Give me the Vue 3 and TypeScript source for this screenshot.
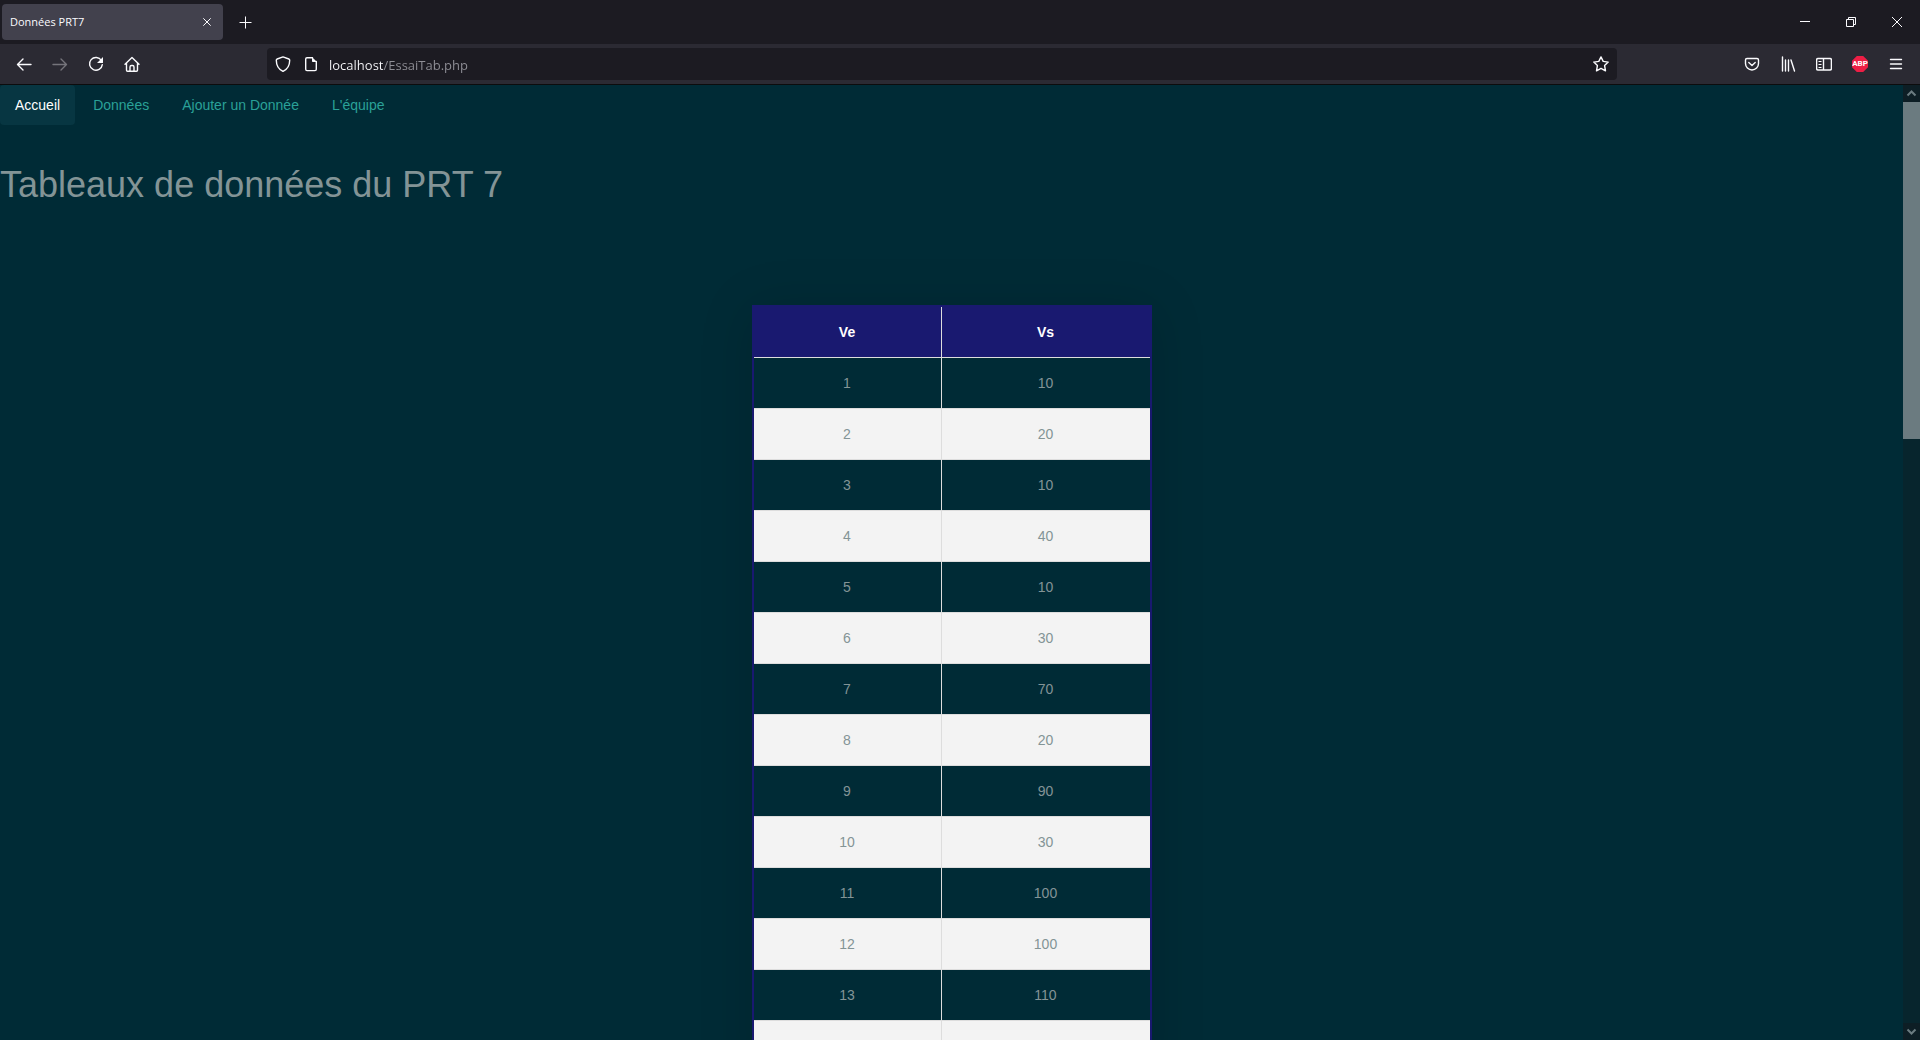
<script setup lang="ts">
import { ref } from 'vue'

interface Mesure {
  ve: string
  vs: string
}

const address = ref('localhost/EssaiTab.php')

const links: string[] = ['Accueil', 'Données', 'Ajouter un Donnée', "L'équipe"]
const active = ref('Accueil')

const sorties: number[] = [10, 20, 10, 40, 10, 30, 70, 20, 90, 30, 100, 100, 110]
const rows: Mesure[] = [
  ...sorties.map((vs, i) => ({ ve: String(i + 1), vs: String(vs) })),
  { ve: '\u00a0', vs: '\u00a0' },
]
</script>

<template>
  <div class="browser">
    <header class="tabbar">
      <div class="tab">
        <span class="tab-title">Données PRT7</span>
        <button class="tab-close" aria-label="Fermer l'onglet">
          <svg width="16" height="16" viewBox="0 0 16 16"><path d="M4.3 4.3l7.4 7.4M11.7 4.3l-7.4 7.4" /></svg>
        </button>
      </div>
      <button class="new-tab" aria-label="Nouvel onglet">
        <svg width="16" height="16" viewBox="0 0 16 16"><path d="M8.5 2.5v12M2.5 8.5h12" /></svg>
      </button>
      <div class="window-controls">
        <button aria-label="Réduire">
          <svg width="16" height="16" viewBox="0 0 16 16"><path d="M3 7.5h10" /></svg>
        </button>
        <button aria-label="Restaurer">
          <svg width="16" height="16" viewBox="0 0 16 16"><path d="M3.5 5.5h7v7h-7zM5.5 5.5v-2h7v7h-2" /></svg>
        </button>
        <button aria-label="Fermer">
          <svg width="16" height="16" viewBox="0 0 16 16"><path d="M3 3l10 10M13 3L3 13" /></svg>
        </button>
      </div>
    </header>

    <div class="toolbar">
      <button class="tool" aria-label="Page précédente">
        <svg width="16" height="16" viewBox="0 0 16 16"><path class="bold" d="M15 8.5H1.5M7 3L1.5 8.5 7 14" /></svg>
      </button>
      <button class="tool" aria-label="Page suivante" disabled>
        <svg width="16" height="16" viewBox="0 0 16 16"><path class="bold" d="M1 8.5h13.5M9 3l5.5 5.5L9 14" /></svg>
      </button>
      <button class="tool" aria-label="Actualiser">
        <svg width="16" height="16" viewBox="0 0 16 16">
          <path class="bold" d="M13.4 4.5A6.4 6.4 0 1 0 14.3 8.6" />
          <path class="solid" d="M15 1v5.4a.6.6 0 0 1-.6.6H9z" />
        </svg>
      </button>
      <button class="tool" aria-label="Accueil">
        <svg width="16" height="16" viewBox="0 0 16 16">
          <path class="bold" d="M1 8.2L8 1.5l7 6.7M2.5 7v7.2q0 1 1 1h9q1 0 1-1V7M6 15v-4q0-1.5 1.5-1.5h1q1.500 0 1.500 1.500v4" />
        </svg>
      </button>
      <div class="spacer"></div>
      <div class="urlbar">
        <button class="url-icon" aria-label="Protection">
          <svg width="16" height="16" viewBox="0 0 16 16">
            <path class="bold" d="M8 .9L13.8 3q.9.3.9 1.3c0 5-2.2 9-6.7 11.1C3.5 13.3 1.3 9.3 1.3 4.3q0-1 .9-1.3z" />
          </svg>
        </button>
        <button class="url-icon" aria-label="Informations du site">
          <svg width="16" height="16" viewBox="0 0 16 16">
            <path class="bold" d="M9.500 1.700H4Q2.700 1.700 2.700 3v10.300q0 1.300 1.300 1.300h8q1.300 0 1.300-1.300V5.500" />
            <path class="solid" d="M9 1l5 5H9.800Q9 6 9 5.200z" />
          </svg>
        </button>
        <input v-model="address" class="url" type="text" aria-label="Adresse" spellcheck="false" />
        <button class="star" aria-label="Marque-page">
          <svg width="16" height="16" viewBox="0 0 16 16">
            <path class="bold" d="M8 .9l2.200 4.500 5 .7-3.600 3.500.9 5.200L8 12.400l-4.500 2.400.9-5.200L.8 6.100l5-.7z" />
          </svg>
        </button>
      </div>
      <div class="spacer"></div>
      <button class="tool" aria-label="Pocket">
        <svg width="16" height="16" viewBox="0 0 16 16">
          <path class="bold" d="M3 2.500h10q1.500 0 1.500 1.500v3.500a6.500 6.500 0 0 1-13 0V4Q1.500 2.500 3 2.500zM4.800 6.500L8 9.500l3.200-3" />
        </svg>
      </button>
      <button class="tool" aria-label="Bibliothèque">
        <svg width="16" height="16" viewBox="0 0 16 16">
          <path class="bold" d="M2.500 1v14M5.500 4v11M8.500 4v11M11 4l3.500 11" />
        </svg>
      </button>
      <button class="tool" aria-label="Panneau latéral">
        <svg width="16" height="16" viewBox="0 0 16 16">
          <path class="bold" d="M2 2.500h12q1.400 0 1.400 1.400v8.700q0 1.400-1.400 1.400H2Q.6 14 .6 12.600V3.900Q.6 2.500 2 2.500zM7.500 2.500V14" />
          <path d="M2.500 5.500h3M2.500 8.500h3M2.500 11.500h3" />
        </svg>
      </button>
      <button class="tool" aria-label="Adblock Plus">
        <span class="abp">ABP</span>
      </button>
      <button class="tool" aria-label="Menu">
        <svg width="16" height="16" viewBox="0 0 16 16"><path class="bold" d="M2.500 3.500h11M2.500 8h11M2.500 12.500h11" /></svg>
      </button>
    </div>

    <div class="viewport">
      <main class="page">
        <nav class="nav">
          <a
            v-for="link in links"
            :key="link"
            href="#"
            :class="{ active: link === active }"
            @click.prevent="active = link"
          >{{ link }}</a>
        </nav>
        <h1>Tableaux de données du PRT 7</h1>
        <table>
          <thead>
            <tr>
              <th scope="col" class="ve">Ve</th>
              <th scope="col">Vs</th>
            </tr>
          </thead>
          <tbody>
            <tr v-for="row in rows" :key="row.ve">
              <td>{{ row.ve }}</td>
              <td>{{ row.vs }}</td>
            </tr>
          </tbody>
        </table>
      </main>
      <div class="scrollbar">
        <button class="scroll-arrow" aria-label="Défiler vers le haut">
          <svg width="17" height="17" viewBox="0 0 17 17"><path d="M4.500 10.500l4-4 4 4" /></svg>
        </button>
        <div class="scroll-thumb"></div>
        <div class="scroll-rest"></div>
        <button class="scroll-arrow" aria-label="Défiler vers le bas">
          <svg width="17" height="17" viewBox="0 0 17 17"><path d="M4.500 6.500l4 4 4-4" /></svg>
        </button>
      </div>
    </div>
  </div>
</template>

<style>
body {
  background: #002b36;
  overflow: hidden;
}
</style>

<style scoped>
.browser {
  display: flex;
  flex-direction: column;
  height: 100vh;
  overflow: hidden;
  color: #fbfbfe;
  font-family: "Open Sans", "Noto Sans", sans-serif;
}
button {
  display: flex;
  align-items: center;
  justify-content: center;
  margin: 0;
  padding: 0;
  border: 0;
  background: none;
  color: inherit;
  font: inherit;
}
svg {
  display: block;
  fill: none;
  stroke: currentColor;
  stroke-width: 1;
}
.bold {
  stroke-width: 1.4;
  stroke-linecap: round;
  stroke-linejoin: round;
}
.solid {
  fill: currentColor;
  stroke: none;
}
.tabbar {
  display: flex;
  flex: none;
  align-items: center;
  height: 44px;
  background: #1c1b22;
}
.tab {
  display: flex;
  align-items: center;
  justify-content: space-between;
  width: 221px;
  height: 36px;
  margin-left: 2px;
  padding: 0 4px 0 8px;
  box-sizing: border-box;
  border-radius: 4px;
  background: #42414d;
}
.tab-title {
  font-size: 11px;
  line-height: 16px;
}
.tab-close {
  width: 24px;
  height: 24px;
}
.new-tab {
  width: 36px;
  height: 36px;
  margin-left: 4px;
}
.window-controls {
  display: flex;
  margin-left: auto;
}
.window-controls button {
  width: 46px;
  height: 44px;
}
.toolbar {
  display: flex;
  flex: none;
  align-items: center;
  height: 40px;
  padding: 0 6px;
  border-bottom: 1px solid #0c0c0d;
  background: #2b2a33;
}
.tool {
  flex: none;
  width: 36px;
  height: 32px;
}
.tool:disabled {
  color: #75747b;
}
.spacer {
  flex: 117 1 0;
}
.urlbar {
  display: flex;
  flex: 1340 1 0;
  align-items: center;
  height: 32px;
  padding: 0 8px 0 2px;
  box-sizing: border-box;
  border-radius: 4px;
  background: #1c1b22;
}
.url-icon {
  width: 28px;
  height: 32px;
}
.url {
  flex: 1;
  height: 24px;
  min-width: 0;
  margin: 0 0 0 4px;
  padding: 1px 0 0;
  border: 0;
  outline: 0;
  background: linear-gradient(to right, #fbfbfe 54px, #8f8f96 54px);
  background-clip: text;
  color: transparent;
  caret-color: #fbfbfe;
  font-family: "Open Sans", "Noto Sans", sans-serif;
  font-size: 13px;
  line-height: 24px;
}
.abp {
  width: 16px;
  height: 16px;
  clip-path: polygon(30% 0, 70% 0, 100% 30%, 100% 70%, 70% 100%, 30% 100%, 0 70%, 0 30%);
  background: #ed1e45;
  color: #fff;
  font-family: Roboto, sans-serif;
  font-size: 8px;
  font-weight: 700;
  line-height: 16px;
  text-align: center;
}
.viewport {
  display: flex;
  flex: 1;
  min-height: 0;
  background: #002b36;
}
.page {
  flex: 1;
  overflow: hidden;
  color: #839496;
  font-family: "Liberation Sans", Arial, sans-serif;
  font-size: 14px;
  line-height: 20px;
}
.nav {
  display: flex;
  gap: 3px;
}
.nav a {
  padding: 10px 15px;
  border-radius: 4px;
  color: #2aa198;
  text-decoration: none;
}
.nav a.active {
  background: #073642;
  color: #fff;
}
h1 {
  margin: 40px 0 100px;
  font-size: 36px;
  font-weight: 400;
  line-height: 40px;
}
table {
  width: 400px;
  margin: 0 auto;
  border: 2px solid #191970;
  border-spacing: 0;
  box-shadow: 0 5px 50px rgba(0, 0, 0, 0.15);
  table-layout: fixed;
}
th,
td {
  padding: 15px;
  border-bottom: 1px solid #ddd;
  text-align: center;
}
th:first-child,
td:first-child {
  border-right: 1px solid #ddd;
}
th {
  background: #191970;
  color: #fff;
}
th.ve {
  width: 157px;
}
tbody tr:nth-child(even) {
  background: #f3f3f3;
}
.scrollbar {
  display: flex;
  flex: none;
  flex-direction: column;
  width: 17px;
  background: #07252d;
}
.scroll-arrow {
  flex: none;
  width: 17px;
  height: 17px;
  background: #0d1e25;
  color: #6b7b80;
}
.scroll-arrow path {
  stroke-width: 2;
}
.scroll-thumb {
  flex: 337 1 0;
  background: #6b7b80;
}
.scroll-rest {
  flex: 584 1 0;
}
</style>
